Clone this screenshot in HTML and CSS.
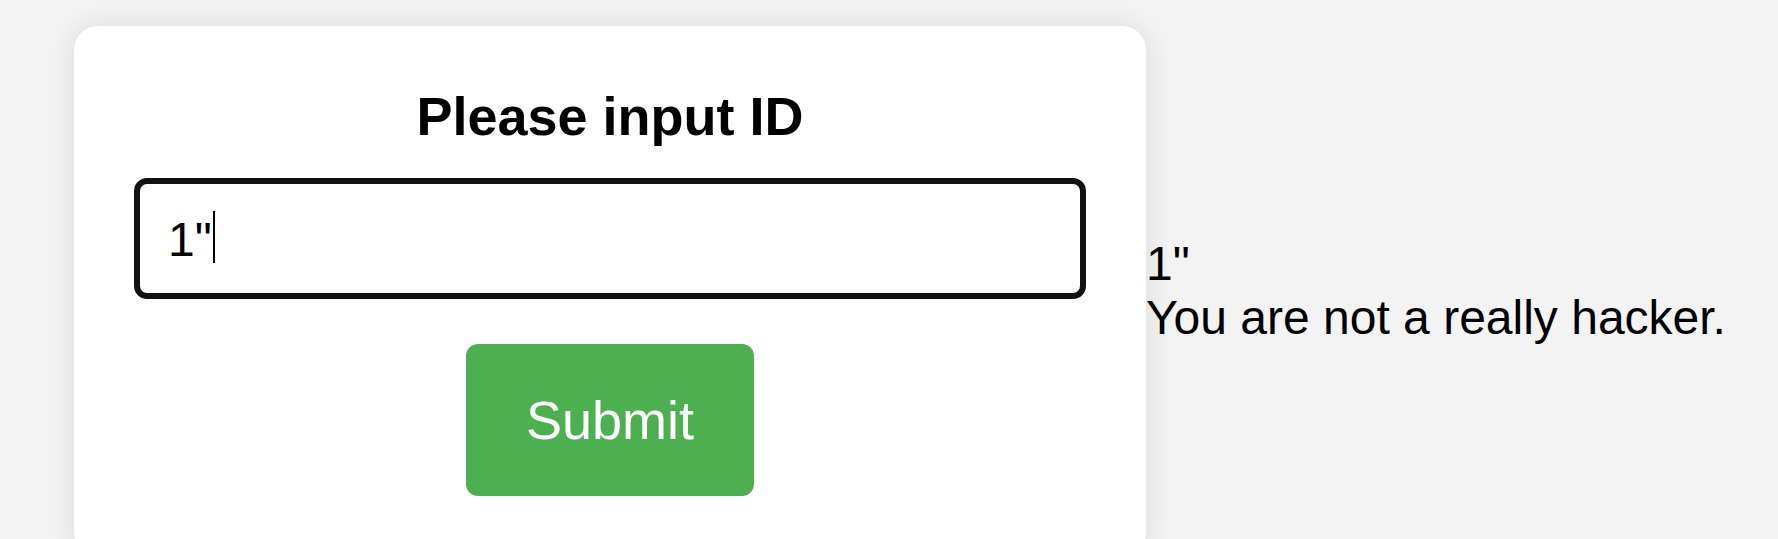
FILE: index.html
```html
<!DOCTYPE html>
<html lang="en">
<head>
<meta charset="utf-8">
<title>Please input ID</title>
<link rel="stylesheet" href="styles.css">
</head>
<body>
<div class="page">
  <form class="card">
    <h2 class="card-title">Please input ID</h2>
    <div class="field"><span class="field-value">1"</span><span class="caret"></span></div>
    <button type="button" class="submit">Submit</button>
  </form>
  <div class="result">
    <div class="result-line">1"</div>
    <div class="result-line">You are not a really hacker.</div>
  </div>
</div>
</body>
</html>
```
FILE: styles.css
```css
html, body {
  margin: 0;
  padding: 0;
  background: #f3f3f3;
  font-family: "Liberation Sans", Arial, sans-serif;
  color: #000;
  overflow: hidden;
}

.page {
  display: flex;
  align-items: center;
  padding: 26px 0 0 74px;
}

.card {
  box-sizing: border-box;
  width: 1072px;
  flex: none;
  background: #fff;
  border-radius: 24px;
  box-shadow: 0 0 30px rgba(0, 0, 0, 0.1);
  padding: 60px;
  display: flex;
  flex-direction: column;
  align-items: center;
}

.card-title {
  margin: 0 0 32px;
  font-size: 54px;
  font-weight: bold;
  line-height: 60px;
  text-align: center;
}

.field {
  box-sizing: border-box;
  align-self: stretch;
  height: 121px;
  border: 6px solid #111;
  border-radius: 13px;
  padding: 2px 28px 0;
  display: flex;
  align-items: center;
  font-size: 48px;
  line-height: 55px;
}

.caret {
  display: inline-block;
  width: 2px;
  height: 52px;
  background: #000;
  margin-left: 1px;
  transform: translateY(-3px);
}

.submit {
  margin-top: 45px;
  border: none;
  border-radius: 12px;
  background: #4caf50;
  color: #fff;
  font-family: "Liberation Sans", Arial, sans-serif;
  font-size: 54px;
  line-height: 62px;
  padding: 45px 60px;
  cursor: pointer;
}

.result {
  font-size: 48px;
  line-height: 54px;
  white-space: nowrap;
}
```
